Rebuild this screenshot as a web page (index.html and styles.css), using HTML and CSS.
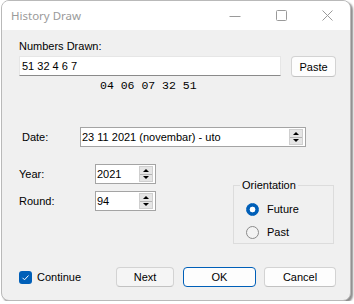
FILE: index.html
```html
<!DOCTYPE html>
<html lang="en">

    <head>
        <meta charset="UTF-8">
        <meta name="viewport" content="width=device-width, initial-scale=1.0">
        <title>History Draw</title>
        <link rel="stylesheet" href="styles.css">
    </head>

    <body>
        <div class="window">
            <div class="titlebar">
                <span class="title">History Draw</span>
                <div class="caption">
                    <span class="cap-btn">
                        <svg width="12" height="12" viewBox="0 0 12 12"><path d="M0.5 6.5h11" stroke="#9a9a9a" stroke-width="1" fill="none"/></svg>
                    </span>
                    <span class="cap-btn">
                        <svg width="11" height="11" viewBox="0 0 11 11"><rect x="0.5" y="0.5" width="10" height="10" rx="1" stroke="#9a9a9a" stroke-width="1" fill="none"/></svg>
                    </span>
                    <span class="cap-btn">
                        <svg width="11" height="11" viewBox="0 0 11 11"><path d="M0.5 0.5l10 10M10.5 0.5l-10 10" stroke="#9a9a9a" stroke-width="1" fill="none"/></svg>
                    </span>
                </div>
            </div>

            <div class="content">
                <div class="label">Numbers Drawn:</div>
                <div class="numbers-row">
                    <div class="textbox">51 32 4 6 7</div>
                    <button class="btn paste">Paste</button>
                </div>
                <div class="sorted">04 06 07 32 51</div>

                <div class="date-row">
                    <span class="date-label">Date:</span>
                    <div class="picker date-picker">
                        <span class="picker-text">23 11 2021 (novembar) - uto</span>
                        <span class="spin"><span class="up"></span><span class="down"></span></span>
                    </div>
                </div>

                <div class="middle">
                    <div class="fields">
                        <div class="field-row">
                            <span class="field-label">Year:</span>
                            <div class="picker num-picker">
                                <span class="picker-text">2021</span>
                                <span class="spin"><span class="up"></span><span class="down"></span></span>
                            </div>
                        </div>
                        <div class="field-row">
                            <span class="field-label">Round:</span>
                            <div class="picker num-picker">
                                <span class="picker-text">94</span>
                                <span class="spin"><span class="up"></span><span class="down"></span></span>
                            </div>
                        </div>
                    </div>

                    <fieldset class="group">
                        <legend>Orientation</legend>
                        <div class="radio-row first">
                            <span class="radio checked"></span>
                            <span>Future</span>
                        </div>
                        <div class="radio-row">
                            <span class="radio"></span>
                            <span>Past</span>
                        </div>
                    </fieldset>
                </div>

                <div class="footer">
                    <span class="checkbox">
                        <svg width="13" height="13" viewBox="0 0 13 13"><path d="M3.5 6.8l2 2 4-4.3" stroke="#fff" stroke-width="1" fill="none"/></svg>
                    </span>
                    <span class="check-label">Continue</span>
                    <div class="buttons">
                        <button class="btn next">Next</button>
                        <button class="btn ok">OK</button>
                        <button class="btn cancel">Cancel</button>
                    </div>
                </div>
            </div>
        </div>
    </body>

</html>
```

FILE: styles.css
```css
body {
    margin: 0;
    background: #fff;
    font-family: 'Liberation Sans', Arial, sans-serif;
    font-size: 11px;
    color: #000;
}

.window {
    margin-left: 1px;
    width: 350px;
    height: 301px;
    box-sizing: border-box;
    border: 1px solid #b9b9b9;
    border-radius: 8px;
    overflow: hidden;
    background: #f0f0f0;
    display: flex;
    flex-direction: column;
    box-shadow: 2px 2px 2px rgba(0, 0, 0, 0.45);
}

.titlebar {
    height: 29px;
    flex-shrink: 0;
    background: #fff;
    display: flex;
    align-items: center;
}

.title {
    margin-left: 9px;
    font-family: 'Noto Sans', sans-serif;
    font-size: 11.5px;
    color: #9a9a9a;
}

.caption {
    margin-left: auto;
    align-self: stretch;
    display: flex;
}

.cap-btn {
    width: 46px;
    display: flex;
    align-items: center;
    justify-content: center;
}

.content {
    flex: 1;
    display: flex;
    flex-direction: column;
    padding: 9px 14px 13px 17px;
}

.label {
    line-height: 14px;
}

.numbers-row {
    margin-top: 3px;
    display: flex;
    align-items: flex-start;
    gap: 10px;
}

.textbox {
    width: 262px;
    height: 20px;
    box-sizing: border-box;
    background: #fff;
    border: 1px solid #e6e6e6;
    border-bottom-color: #8a8a8a;
    padding-left: 2px;
    line-height: 18px;
}

.btn {
    height: 20px;
    box-sizing: border-box;
    padding: 0;
    font-family: 'Liberation Sans', Arial, sans-serif;
    font-size: 11px;
    color: #000;
    background: #fdfdfd;
    border: 1px solid #d3d3d3;
    border-bottom-color: #c2c2c2;
    border-radius: 4px;
}

.paste {
    width: 45px;
    height: 21px;
}

.sorted {
    margin: 2px 0 0 81px;
    font-family: 'Liberation Mono', 'Courier New', monospace;
    font-size: 11.5px;
    line-height: 14px;
}

.date-row {
    margin-top: 34px;
    padding-left: 3px;
    display: flex;
    align-items: center;
}

.date-label {
    width: 58px;
}

.picker {
    height: 20px;
    box-sizing: border-box;
    background: #fff;
    border: 1px solid #a4a4a4;
    display: flex;
    align-items: center;
    padding-left: 1px;
}

.date-picker {
    width: 226px;
}

.num-picker {
    width: 61px;
}

.picker-text {
    flex: 1;
}

.spin {
    width: 14px;
    height: 16px;
    margin-right: 2px;
    box-sizing: border-box;
    background: #e5e5e5;
    border: 1px solid #cfcfcf;
    display: flex;
    flex-direction: column;
}

.spin span {
    flex: 1;
    display: flex;
    align-items: center;
    justify-content: center;
}

.spin .up {
    border-bottom: 1px solid #b4b4b4;
}

.spin .up::before {
    content: '';
    border-left: 3px solid transparent;
    border-right: 3px solid transparent;
    border-bottom: 3px solid #000;
}

.spin .down::before {
    content: '';
    border-left: 3px solid transparent;
    border-right: 3px solid transparent;
    border-top: 3px solid #000;
}

.middle {
    margin-top: 17px;
    display: flex;
    align-items: flex-start;
}

.fields {
    display: flex;
    flex-direction: column;
    gap: 7px;
}

.field-row {
    display: flex;
    align-items: center;
}

.field-label {
    width: 76px;
}

.group {
    width: 101px;
    box-sizing: border-box;
    margin: 14px 2px 0 auto;
    padding: 0 0 3px 6px;
    border: 1px solid #dcdcdc;
    min-width: 0;
}

.group legend {
    padding: 0 2px;
    line-height: 14px;
}

.radio-row {
    height: 16px;
    margin-top: 7px;
    display: flex;
    align-items: center;
    gap: 8px;
}

.radio-row.first {
    margin-top: 9px;
}

.radio {
    width: 13px;
    height: 13px;
    margin-left: 6px;
    box-sizing: border-box;
    border-radius: 50%;
    border: 1px solid #8a8a8a;
    background: #f3f3f3;
}

.radio.checked {
    border-color: #005fb8;
    background: radial-gradient(circle, #fff 0 2.6px, #005fb8 3.2px);
}

.footer {
    margin-top: auto;
    height: 20px;
    display: flex;
    align-items: center;
}

.checkbox {
    width: 13px;
    height: 13px;
    border-radius: 3px;
    background: #005fb8;
    display: flex;
}

.check-label {
    margin-left: 5px;
}

.buttons {
    margin-left: auto;
    display: flex;
}

.next {
    width: 58px;
    background: #f5f5f5;
}

.ok {
    width: 73px;
    margin-left: 9px;
    border-color: #005fb8;
}

.cancel {
    width: 72px;
    margin-left: 8px;
}
```
